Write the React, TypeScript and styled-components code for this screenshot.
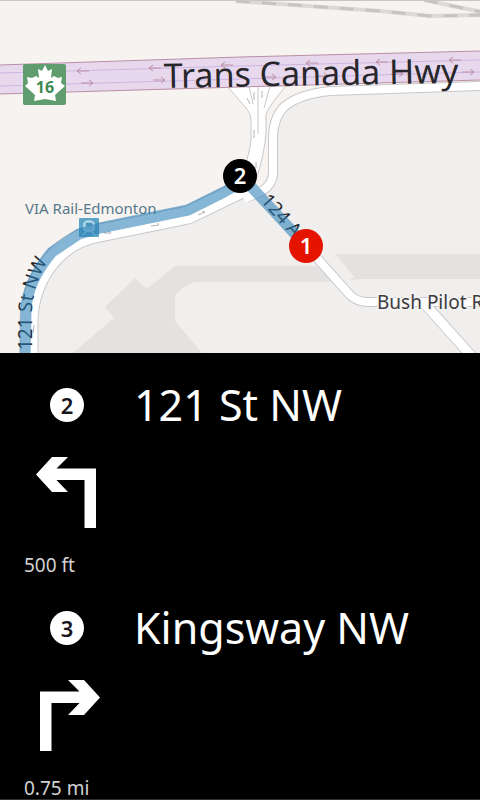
import React from "react";
import styled, { createGlobalStyle } from "styled-components";

const GlobalStyle = createGlobalStyle`
  *, *::before, *::after { box-sizing: border-box; }
  body { margin: 0; background: #000; font-family: "Noto Sans", "Open Sans", sans-serif; }
`;

const Page = styled.main`
  display: flex;
  flex-direction: column;
  min-height: 100vh;
  background: #000;
  color: #fff;
`;

const MapPanel = styled.section`
  height: 353px;
  border-top: 1px solid #c9c6c4;
  background: #f7f3f0;
  overflow: hidden;
`;

const MapDrawing = styled.svg`
  display: block;
  width: 100%;
  height: 352px;
  font-family: "Noto Sans", "Open Sans", sans-serif;
`;

const RoadName = styled.text<{ $size: number; $color?: string }>`
  font-size: ${(p) => p.$size}px;
  fill: ${(p) => p.$color ?? "#26262b"};
`;

const PinNumber = styled.text`
  font-size: 22px;
  font-weight: 600;
  fill: #fff;
  text-anchor: middle;
`;

const StepList = styled.ol`
  margin: 0;
  padding: 0;
  list-style: none;
  border-bottom: 1px solid #303030;
`;

const Step = styled.li`
  display: grid;
  grid-template-columns: 110px 1fr;
  grid-template-rows: 50px 70px 22px;
  row-gap: 27px;
  padding: 27px 24px 0;
  height: 223px;
`;

const StepNumber = styled.span`
  display: grid;
  place-items: center;
  align-self: center;
  width: 34px;
  height: 34px;
  margin-left: 26px;
  border-radius: 50%;
  background: #fff;
  color: #16161a;
  font-size: 22px;
  font-weight: 600;
  line-height: 34px;
`;

const StreetName = styled.h2`
  margin: 0;
  font-size: 43px;
  font-weight: 400;
  line-height: 50px;
  white-space: nowrap;
`;

const TurnIcon = styled.svg`
  grid-column: 1;
  width: 64px;
  height: 71px;
  margin-left: 12px;
  fill: #fff;
`;

const Distance = styled.span`
  grid-column: 1;
  color: #d2d2d2;
  font-size: 19px;
  line-height: 22px;
  white-space: nowrap;
`;

type Turn = "left" | "right";

const steps: { number: number; street: string; turn: Turn; distance: string }[] = [
  { number: 2, street: "121 St NW", turn: "left", distance: "500 ft" },
  { number: 3, street: "Kingsway NW", turn: "right", distance: "0.75 mi" },
];

const turnShape = "M0 17.500 16 0H32L20.500 11.500H60V71H48.500V23H20.500L32 35H16Z";

const TurnArrow = ({ turn }: { turn: Turn }) => (
  <TurnIcon viewBox="0 0 64 71" role="img" aria-label={`Turn ${turn}`}>
    <path d={turnShape} transform={turn === "right" ? "translate(64 0) scale(-1 1)" : undefined} />
  </TurnIcon>
);

const Road = ({ d, width = 8 }: { d: string; width?: number }) => (
  <g fill="none" strokeLinejoin="round">
    <path d={d} stroke="#c9c7ca" strokeWidth={width + 2} />
    <path d={d} stroke="#fff" strokeWidth={width} />
  </g>
);

const westArrows = [[83, 71], [155, 68], [227, 65], [312, 63], [382, 62], [455, 60]];
const eastArrows = [[87, 83], [159, 80], [270, 77], [322, 76], [397, 74], [468, 72]];

const RouteMap = () => (
  <MapDrawing viewBox="0 1 480 352" preserveAspectRatio="xMidYMid slice" role="img" aria-label="Route map">
    <path
      d="M480 86 330 90 300 96 280 108 274 130V180L244 198 190 215 90 234 65 248 44 272 33 310 32 353H480Z"
      fill="#f0efee"
    />
    <path
      d="M73 353 114 318 105 307 135 278 147 289 175 266H330L326 254H480V279H360L330 282H195Q184 285 175 295V321L202 353Z"
      fill="#e3e2e0"
    />

    <g fill="none">
      <path d="M236 1 380 11 430 16 482 15M424 0 482 12" stroke="#dcdad8" strokeWidth="4" />
      <path d="M236 1 380 11 430 16 482 15M424 0 482 12" stroke="#c6c5c4" strokeWidth="3" strokeDasharray="14 12" />
    </g>

    <Road d="M482 86 330 91Q300 94 285 106Q274 116 273 136V172Q273 184 262 191L246 198" />
    <g fill="none" stroke="#c9c7ca">
      <path d="M227 86 246 108Q251 113 251 120V140Q249 160 238 180H256Q265 152 266 132V115Q267 108 286 86Z" fill="#fff" />
      <path d="M249 86 253 104M258 86V134M270 86 264 108" />
      <path d="M247 98 250 104M254 92V100M262 98V91M254 130V138M256 162V168" stroke="#b5b3b6" />
    </g>
    <Road d="M256 182 240 190 188 215 95 234Q66 240 47 266Q30 290 29 320V360" width={17} />
    <path d="M262 191 244 199" stroke="#fff" strokeWidth="8" />
    <path d="M322 250 348 282" stroke="#f0efee" strokeWidth="16" />
    <Road d="M475 360 425 304" width={9} />
    <Road d="M308 248 350 295Q357 302 368 302H484" />
    <path d="M475 360 422 301" stroke="#fff" strokeWidth="9" />

    <path d="M0 65 240 57 480 51V80L240 87 0 94Z" fill="#e7d8ee" />
    <g fill="none">
      <path d="M0 73 240 66 480 60M0 86 240 79 480 72" stroke="#cdb6e2" strokeWidth="1" />
      <path d="M0 65 240 57 480 51M0 94 240 87 480 80" stroke="#b98fa5" strokeWidth="1" />
      {westArrows.map(([x, y]) => (
        <path key={x} d={`M${x + 6} ${y}H${x - 6}M${x - 2} ${y - 3}L${x - 6} ${y} ${x - 2} ${y + 3}`} stroke="#bd8fa5" />
      ))}
      {eastArrows.map(([x, y]) => (
        <path key={x} d={`M${x - 6} ${y}H${x + 6}M${x + 2} ${y - 3}L${x + 6} ${y} ${x + 2} ${y + 3}`} stroke="#bd8fa5" />
      ))}
    </g>
    <path
      d="M104 233H111M109 231 111 233M151 226 159 225M157 223 159 225M198 215 205 212M202 211 205 212M33 333 34 325"
      fill="none"
      stroke="#b5b3b6"
    />

    <RoadName $size={34} x="164" y="88" transform="rotate(-1 164 88)">Trans Canada Hwy</RoadName>
    <RoadName $size={15} $color="#56798b" x="25" y="214">VIA Rail-Edmonton</RoadName>
    <RoadName $size={19} $color="#3c3c40" x="377" y="309" stroke="#f4f3f2" strokeWidth="3" paintOrder="stroke">Bush Pilot R</RoadName>
    <RoadName $size={19} x="260" y="201" transform="rotate(48 260 201)">124 A</RoadName>
    <path id="street-curve" d="M32 350V310Q33 285 50 257L58 244" fill="none" />
    <RoadName $size={19}>
      <textPath href="#street-curve">121 St NW</textPath>
    </RoadName>

    <g>
      <rect x="79" y="218" width="20" height="19" rx="1" fill="#5ba6c8" />
      <path d="M84 224Q84 221 89 221T94 224V229Q94 231 92 231H86Q84 231 84 229ZM86 232 83 235M92 232 95 235" fill="#8fc4dc" stroke="#e4f2f7" />
      <path d="M86 223H92V226H86Z" fill="#4a96ba" />
    </g>

    <path
      d="M240 183 224 192 188 210 100 228 79 234 52 252Q27 282 26 310L25 360M245 180 306 246"
      fill="none"
      stroke="rgba(40, 127, 183, 0.57)"
      strokeWidth="11"
      strokeLinejoin="round"
    />

    <rect x="23" y="64" width="43" height="41" rx="2" fill="#5f9d6e" />
    <path
      d="M45 65 48 71 52 69 51 78 54 76 58 78 62 77 61 83 65 86 55 95 56 101 45 99 34 101 35 95 25 86 28 83 27 77 32 78 36 76 39 78 38 69 42 71Z"
      fill="#fff"
    />
    <text x="45" y="93" fontSize="16" fontWeight="700" fill="#3f8a52" textAnchor="middle">16</text>

    <circle cx="240" cy="176" r="17" fill="#000" />
    <PinNumber x="240" y="184">2</PinNumber>
    <circle cx="306" cy="246" r="17" fill="#e51400" />
    <PinNumber x="306" y="254">1</PinNumber>
  </MapDrawing>
);

export default function App() {
  return (
    <Page>
      <GlobalStyle />
      <MapPanel>
        <RouteMap />
      </MapPanel>
      <StepList>
        {steps.map((step) => (
          <Step key={step.number}>
            <StepNumber>{step.number}</StepNumber>
            <StreetName>{step.street}</StreetName>
            <TurnArrow turn={step.turn} />
            <Distance>{step.distance}</Distance>
          </Step>
        ))}
      </StepList>
    </Page>
  );
}
